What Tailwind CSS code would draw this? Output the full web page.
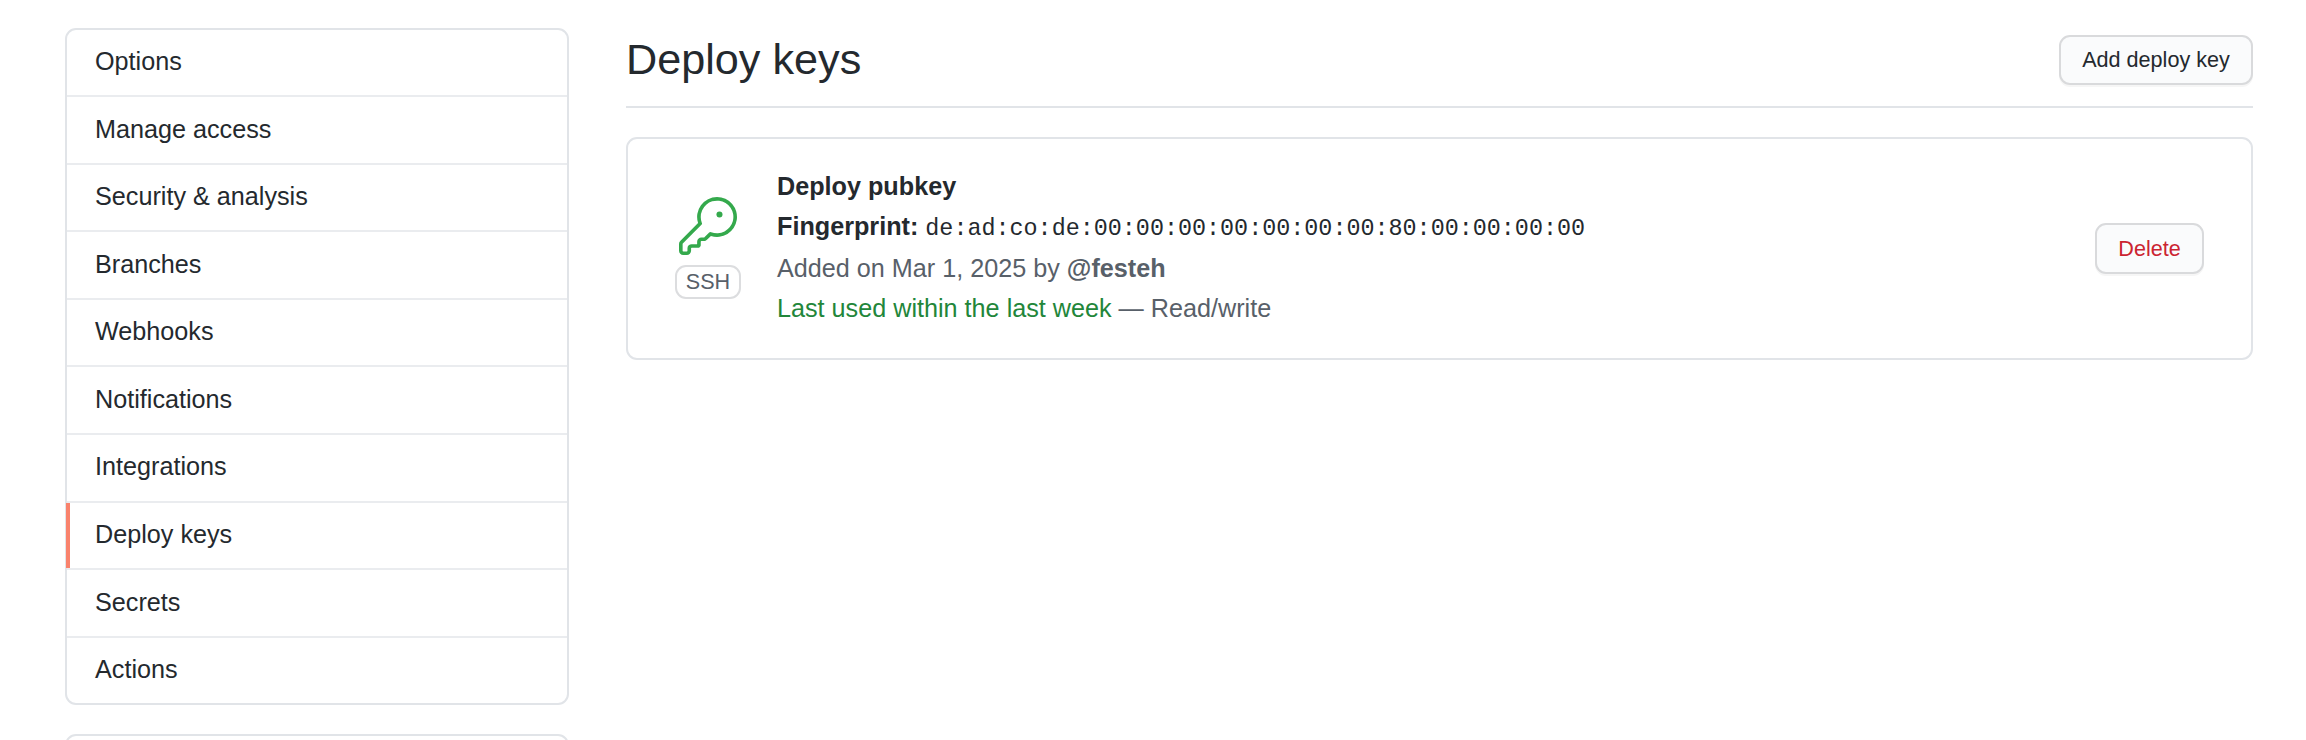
<!DOCTYPE html>
<html lang="en">
<head>
<meta charset="utf-8">
<title>Deploy keys</title>
<script src="https://cdn.jsdelivr.net/npm/@tailwindcss/browser@4"></script>
</head>
<body class="h-[740px] overflow-hidden bg-white pt-7 pl-[65px] font-['Liberation_Sans',Arial,sans-serif] text-[25.2px] text-[#24292e]">
<div class="flex h-[712px] items-start gap-[57px] overflow-hidden">
  <aside class="w-[504px] shrink-0">
    <nav class="flex h-[677px] flex-col rounded-[11px] border-2 border-[#e1e4e8] leading-[62px]">
      <a class="h-[67px] shrink-0 border-b-2 border-[#eaecef] pl-7">Options</a>
      <a class="h-[68px] shrink-0 border-b-2 border-[#eaecef] pl-7 leading-[64px]">Manage access</a>
      <a class="h-[67px] shrink-0 border-b-2 border-[#eaecef] pl-7">Security &amp; analysis</a>
      <a class="h-[68px] shrink-0 border-b-2 border-[#eaecef] pl-7 leading-[64px]">Branches</a>
      <a class="h-[67px] shrink-0 border-b-2 border-[#eaecef] pl-7">Webhooks</a>
      <a class="h-[68px] shrink-0 border-b-2 border-[#eaecef] pl-7 leading-[64px]">Notifications</a>
      <a class="h-[68px] shrink-0 border-b-2 border-[#eaecef] pl-7">Integrations</a>
      <a class="relative h-[67px] shrink-0 border-b-2 border-[#eaecef] pl-7"><span class="absolute top-0 bottom-0 -left-px w-1 bg-[#f9826c]"></span>Deploy keys</a>
      <a class="h-[68px] shrink-0 border-b-2 border-[#eaecef] pl-7 leading-[64px]">Secrets</a>
      <a class="h-[65px] shrink-0 pl-7">Actions</a>
    </nav>
    <nav class="mt-[29px] h-[100px] rounded-[11px] border-2 border-[#e1e4e8]"></nav>
  </aside>
  <main class="w-[1627px] shrink-0">
    <header class="flex h-20 items-start justify-between border-b-2 border-[#e1e4e8]">
      <h1 class="mt-[-1px] text-[43.2px] leading-[65px]">Deploy keys</h1>
      <button class="mt-[7px] h-[50px] w-[194px] rounded-[11px] border-2 border-[#d9dadc] bg-[#fafbfc] text-[21.6px] leading-[46px] shadow-[0_2px_0_rgba(27,31,35,0.04)]">Add deploy key</button>
    </header>
    <section class="mt-[29px] flex h-[223px] items-start rounded-[11px] border-2 border-[#e1e4e8]">
      <div class="mt-[58px] ml-[47px] flex w-[66px] flex-col items-center">
        <svg class="size-[58px]" viewBox="0 0 24 24" fill="#34a94c"><path d="M16.75 8.5a1.25 1.25 0 100-2.5 1.25 1.25 0 000 2.5z"/><path fill-rule="evenodd" d="M15.75 0a8.25 8.25 0 00-7.851 10.79L.513 18.178A1.75 1.75 0 000 19.414v2.836C0 23.217.784 24 1.75 24h1.5A1.75 1.75 0 005 22.25v-1a.25.25 0 01.25-.25h2.735a.75.75 0 00.545-.22l.214-.213A.875.875 0 009 19.948V18.5a.25.25 0 01.25-.25h1.086c.464 0 .91-.184 1.237-.513l1.636-1.636A8.25 8.25 0 1015.75 0zM9 8.25a6.75 6.75 0 114.288 6.287.75.75 0 00-.804.168l-1.971 1.972a.25.25 0 01-.177.073H9.25A1.75 1.75 0 007.5 18.5v1H5.25a1.75 1.75 0 00-1.75 1.75v1a.25.25 0 01-.25.25h-1.5a.25.25 0 01-.25-.25v-2.836a.25.25 0 01.073-.177l7.722-7.721a.75.75 0 00.168-.804A6.73 6.73 0 019 8.25z"/></svg>
        <span class="mt-[10px] h-[34px] w-[66px] rounded-[11px] border-2 border-[#dcdddf] text-center text-[21.6px] leading-[30px] text-[#586069]">SSH</span>
      </div>
      <div class="mt-[27px] ml-9 flex-1 leading-[41px] text-[#586069]">
        <p class="h-10 font-bold text-[#24292e]">Deploy pubkey</p>
        <p class="h-[42px] text-[#24292e]"><strong>Fingerprint:</strong> <code class="font-['Liberation_Mono',monospace] text-[23.4px]">de:ad:co:de:00:00:00:00:00:00:00:80:00:00:00:00</code></p>
        <p class="h-10">Added on Mar 1, 2025 by <strong>@festeh</strong></p>
        <p><span class="text-[#22863a]">Last used within the last week</span> — Read/write</p>
      </div>
      <button class="mt-[84px] mr-[47px] h-[51px] w-[109px] rounded-[11px] border-2 border-[#d9dadc] bg-[#fafbfc] text-[21.6px] leading-[46px] text-[#cb2431] shadow-[0_2px_0_rgba(27,31,35,0.04)]">Delete</button>
    </section>
  </main>
</div>
</body>
</html>
